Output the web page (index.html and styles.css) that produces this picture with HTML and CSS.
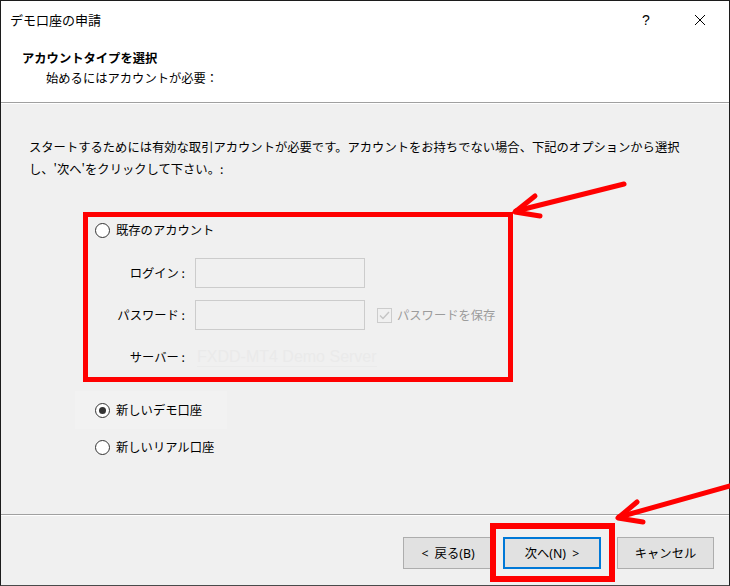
FILE: index.html
```html
<!DOCTYPE html>
<html lang="ja">
<head>
<meta charset="utf-8">
<title>デモ口座の申請</title>
<link rel="stylesheet" href="styles.css">
</head>
<body>
<div class="window">
  <div class="titlebar">
    <span class="title">デモ口座の申請</span>
    <span class="tb-help">?</span>
    <span class="tb-close"><svg width="12" height="12" viewBox="0 0 12 12"><path d="M1 1 L11 11 M11 1 L1 11" stroke="#000" stroke-width="1" fill="none"/></svg></span>
  </div>
  <div class="header">
    <div class="h-title">アカウントタイプを選択</div>
    <div class="h-sub">始めるにはアカウントが必要：</div>
  </div>
  <div class="content">
    <p class="intro">スタートするためには有効な取引アカウントが必要です。アカウントをお持ちでない場合、下記のオプションから選択<br>し、'次へ'をクリックして下さい。:</p>
    <div class="group">
      <div class="radio-row first"><span class="radio"></span><span>既存のアカウント</span></div>
      <div class="field-row"><span class="lbl">ログイン :</span><span class="input"></span></div>
      <div class="field-row"><span class="lbl">パスワード :</span><span class="input"></span><span class="check"><svg width="13" height="13" viewBox="0 0 13 13"><path d="M2 6.5 L5 9.5 L11 3" stroke="#c4c4c4" stroke-width="1.4" fill="none"/></svg></span><span class="check-lbl">パスワードを保存</span></div>
      <div class="field-row"><span class="lbl">サーバー :</span><span class="faint">FXDD-MT4 Demo Server</span></div>
    </div>
    <div class="radio-row demo"><span class="radio checked"></span><span>新しいデモ口座</span></div>
    <div class="radio-row real"><span class="radio"></span><span>新しいリアル口座</span></div>
  </div>
  <div class="footer">
    <button class="btn back">&lt; 戻る(B)</button>
    <button class="btn next">次へ(N) &gt;</button>
    <button class="btn cancel">キャンセル</button>
  </div>
</div>
<div class="hl-btn"></div>
<svg class="arrows" width="730" height="586" viewBox="0 0 730 586">
  <g stroke="#ff0000" stroke-width="5" stroke-linecap="round" stroke-linejoin="round" fill="none">
    <path d="M624 184 L516 211"/>
    <path d="M535 196 L515 212 L540 216"/>
    <path d="M730 486 L619 517"/>
    <path d="M637 502 L618 518 L643 522"/>
  </g>
</svg>
</body>
</html>
```

FILE: styles.css
```css
html, body {
  margin: 0;
  padding: 0;
  background: #1c1c1c;
}
body {
  position: relative;
  width: 730px;
  height: 586px;
  overflow: hidden;
  font-family: "Noto Sans CJK JP", "Noto Sans", sans-serif;
  font-size: 12.3px;
  color: #000;
}
.window {
  box-sizing: border-box;
  width: 730px;
  height: 586px;
  border-top: 1px solid #1c1c1c;
  border-left: 1px solid #1c1c1c;
  border-right: 1px solid #1c1c1c;
  border-bottom: 1px solid #4a4a4a;
  display: flex;
  flex-direction: column;
  background: #f0f0f0;
}
.titlebar {
  height: 38px;
  background: #fff;
  display: flex;
  align-items: center;
  padding-left: 9px;
  flex: none;
}
.title {
  flex: 1;
  font-size: 13px;
  line-height: 20px;
}
.tb-help {
  width: 20px;
  text-align: center;
  font-size: 14px;
  font-family: "Liberation Sans", sans-serif;
  margin-right: 38px;
}
.tb-close {
  display: flex;
  width: 12px;
  height: 12px;
  margin-right: 23px;
}
.header {
  height: 64px;
  background: #fff;
  box-sizing: border-box;
  padding: 9px 0 0 21px;
  border-bottom: 1px solid #a0a0a0;
  flex: none;
}
.h-title {
  font-weight: bold;
  line-height: 20px;
}
.h-sub {
  line-height: 20px;
  padding-left: 24px;
}
.content {
  flex: 1;
  border-top: 1px solid #fff;
  padding: 32px 0 0 28px;
}
.intro {
  margin: 0;
  line-height: 22px;
}
.group {
  box-sizing: border-box;
  width: 430px;
  height: 170px;
  margin: 32px 0 0 54px;
  border: 5px solid #ff0000;
}
.radio-row {
  display: flex;
  align-items: center;
  height: 26px;
}
.radio-row.first {
  padding-left: 7px;
}
.radio {
  box-sizing: border-box;
  width: 15px;
  height: 15px;
  border: 1px solid #333;
  border-radius: 50%;
  background: #fff;
  margin-right: 6px;
  display: flex;
  align-items: center;
  justify-content: center;
}
.radio.checked::after {
  content: "";
  width: 7px;
  height: 7px;
  border-radius: 50%;
  background: #333;
}
.field-row {
  display: flex;
  align-items: center;
  height: 30px;
  margin-top: 12px;
}
.radio-row.first + .field-row {
  margin-top: 15px;
}
.lbl {
  width: 97px;
  text-align: right;
}
.input {
  box-sizing: border-box;
  width: 170px;
  height: 30px;
  margin-left: 10px;
  border: 1px solid #cccccc;
  background: #f0f0f0;
}
.check {
  box-sizing: border-box;
  width: 15px;
  height: 15px;
  margin-left: 12px;
  border: 1px solid #cccccc;
  background: #f0f0f0;
  display: flex;
  align-items: center;
  justify-content: center;
}
.check svg {
  display: block;
}
.check-lbl {
  margin-left: 5px;
  color: #9c9c9c;
}
.faint {
  margin-left: 12px;
  font-family: "Liberation Sans", sans-serif;
  font-size: 16px;
  color: #eaeaea;
  border-bottom: 1px solid #ebebeb;
}
.radio-row.demo {
  box-sizing: border-box;
  width: 152px;
  height: 38px;
  margin: 9px 0 0 46px;
  padding-left: 20px;
  background: #f2f2f2;
}
.radio-row.real {
  margin: 5px 0 0 66px;
}
.footer {
  flex: none;
  height: 71px;
  box-sizing: border-box;
  border-top: 1px solid #a0a0a0;
  box-shadow: inset 0 1px 0 #fff;
  padding: 22px 15px 0 0;
  display: flex;
  justify-content: flex-end;
  align-items: flex-start;
}
.btn {
  box-sizing: border-box;
  height: 32px;
  background: #e1e1e1;
  border: 1px solid #adadad;
  font-family: "Noto Sans", "Noto Sans CJK JP", sans-serif;
  font-size: 12.3px;
  word-spacing: 3px;
  color: #000;
  padding: 0;
}
.back {
  width: 90px;
}
.next {
  width: 98px;
  margin-left: 10px;
  border: 2px solid #0078d7;
}
.cancel {
  width: 97px;
  margin-left: 16px;
}
.hl-btn {
  position: absolute;
  left: 490px;
  top: 523px;
  width: 125px;
  height: 59px;
  box-sizing: border-box;
  border: 6px solid #ff0000;
}
.arrows {
  position: absolute;
  left: 0;
  top: 0;
  pointer-events: none;
}
```
